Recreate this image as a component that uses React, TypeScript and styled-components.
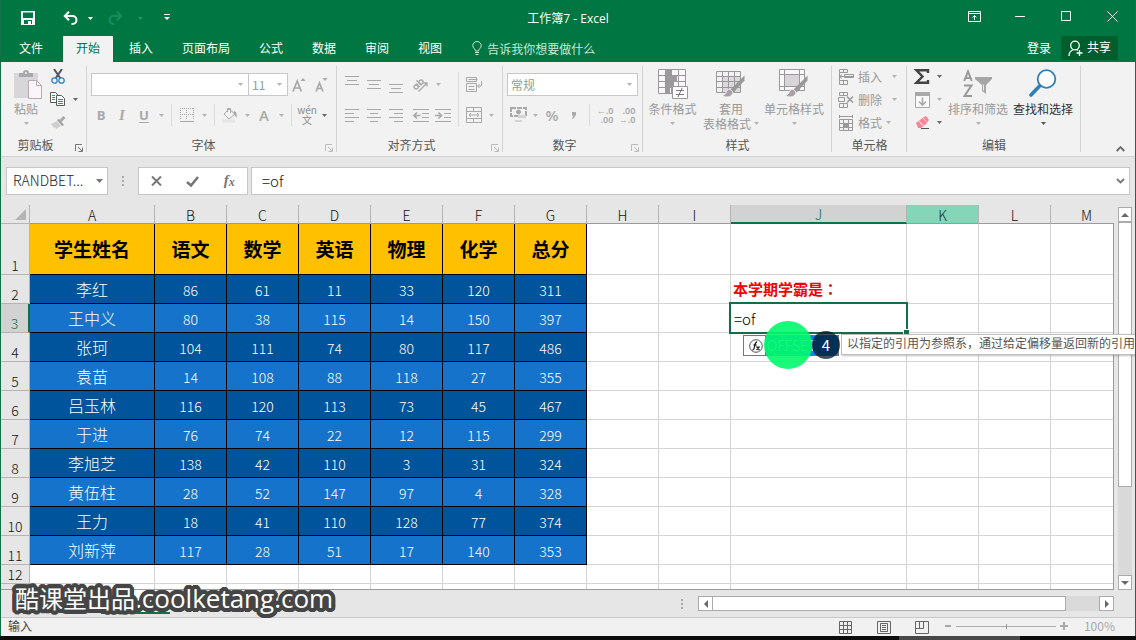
import React from 'react';
import styled, { createGlobalStyle, css } from 'styled-components';

const GREEN = '#007642';
const SHEET_GREEN = '#127049';
const OFF = '#a9a9a9';
const DARK = '#5a5a5a';
const CJK = '"Noto Sans CJK SC", sans-serif';

const GlobalStyle = createGlobalStyle`
  * { box-sizing: border-box; }
  body { margin: 0; font-family: ${CJK}; font-size: 12px; color: #444; }
  button, input, select { font-family: inherit; font-size: inherit; color: inherit; }
  button { border: 0; padding: 0; background: none; cursor: pointer; }
  svg { display: block; flex: none; }
`;

/* ---------- shell ---------- */
const Frame = styled.div`
  position: relative;
  display: flex;
  flex-direction: column;
  height: 100vh;
  background: #e6e6e6;
  overflow: hidden;
`;
const Window = styled.div`
  display: flex;
  flex-direction: column;
  flex: 1;
  min-height: 0;
  border: solid ${SHEET_GREEN};
  border-width: 0 1px;
`;
const Taskbar = styled.div`
  display: flex;
  justify-content: flex-end;
  height: 4px;
  padding-right: 116px;
  background: #0d0d0d;
`;
const TaskItem = styled.div`
  width: 121px;
  background: #484848;
`;

/* ---------- title bar and tabs ---------- */
const TitleBar = styled.header`
  display: grid;
  grid-template-columns: 1fr auto 1fr;
  align-items: center;
  height: 36px;
  background: ${GREEN};
  color: #fff;
`;
const QuickAccess = styled.div`
  display: flex;
  align-items: center;
  padding-left: 16px;
`;
const Title = styled.h1`
  margin: 0;
  padding-top: 1px;
  font-family: "Open Sans", ${CJK};
  font-size: 12px;
  font-weight: 400;
  line-height: 18px;
`;
const WindowButtons = styled.div`
  display: flex;
  justify-content: flex-end;
`;
const TitleButton = styled.button<{ $w: number; $dim?: boolean; $gap?: number }>`
  display: flex;
  align-items: center;
  justify-content: center;
  width: ${(p) => p.$w}px;
  height: 32px;
  margin-left: ${(p) => p.$gap ?? 0}px;
  color: ${(p) => (p.$dim ? '#128f5e' : '#fff')};
`;
const TabBar = styled.nav`
  display: flex;
  align-items: stretch;
  gap: 3px;
  height: 26px;
  padding-left: 5px;
  background: ${GREEN};
  color: #fff;
`;
const Tab = styled.button<{ $active?: boolean }>`
  padding: 0 13px 4px;
  white-space: nowrap;
  &:first-child { margin-right: 4px; }
  ${(p) => p.$active && css`background: #f2f2f2; color: ${GREEN};`}
`;
const TellMe = styled.button`
  display: flex;
  align-items: center;
  gap: 5px;
  margin-left: 14px;
  padding-bottom: 2px;
  color: #c4ecd6;
`;
const Account = styled.div`
  display: flex;
  gap: 10px;
  margin-left: auto;
  padding-right: 17px;
`;
const Login = styled.button`
  padding-bottom: 4px;
`;
const Share = styled.button`
  display: flex;
  align-items: center;
  gap: 4px;
  height: 24px;
  padding: 0 7px;
  background: #005e2c;
  & > span { padding-bottom: 3px; }
`;

/* ---------- ribbon ---------- */
const Ribbon = styled.div`
  display: flex;
  height: 95px;
  border-bottom: 1px solid #d0d0d0;
  background: #f2f2f2;
`;
const GroupBox = styled.section<{ $w: number }>`
  position: relative;
  display: flex;
  flex-direction: column;
  width: ${(p) => p.$w}px;
  flex: none;
  &::after {
    content: '';
    position: absolute;
    top: 4px;
    right: 0;
    bottom: 4px;
    width: 1px;
    background: #d3d3d3;
  }
`;
const GroupBody = styled.div<{ $stack?: boolean; $left?: number }>`
  display: flex;
  flex-direction: ${(p) => (p.$stack ? 'column' : 'row')};
  gap: ${(p) => (p.$stack ? 8 : 0)}px;
  height: 75px;
  padding: ${(p) => (p.$stack ? 11 : 3)}px 0 0 ${(p) => p.$left ?? 4}px;
`;
const GroupFooter = styled.div`
  display: flex;
  align-items: center;
  height: 18px;
`;
const GroupLabel = styled.span`
  flex: 1;
  padding-bottom: 3px;
  text-align: center;
  color: #555;
`;
const Launcher = styled.button`
  display: flex;
  align-items: center;
  justify-content: center;
  width: 17px;
  height: 18px;
  padding-top: 4px;
`;
const Row = styled.div<{ $h: number }>`
  display: flex;
  align-items: center;
  height: ${(p) => p.$h}px;
`;
const Column = styled.div<{ $gap?: number; $top?: number }>`
  display: flex;
  flex-direction: column;
  gap: ${(p) => p.$gap ?? 0}px;
  padding-top: ${(p) => p.$top ?? 0}px;
`;
const Tool = styled.button<{ $w?: number; $on?: boolean }>`
  display: flex;
  align-items: center;
  justify-content: center;
  flex: none;
  width: ${(p) => p.$w ?? 22}px;
  height: 22px;
  color: ${(p) => (p.$on ? DARK : OFF)};
`;
const Glyph = styled.span<{ $size?: number; $italic?: boolean; $under?: boolean }>`
  font-family: ${(p) => (p.$italic ? '"Liberation Serif", serif' : '"Open Sans", sans-serif')};
  font-size: ${(p) => p.$size ?? 13}px;
  font-weight: ${(p) => (p.$size ? 600 : 700)};
  font-style: ${(p) => (p.$italic ? 'italic' : 'normal')};
  line-height: 20px;
  text-decoration: ${(p) => (p.$under ? 'underline' : 'none')};
  text-underline-offset: 2px;
`;
const VLine = styled.span<{ $h?: number }>`
  width: 1px;
  height: ${(p) => p.$h ?? 22}px;
  margin: 0 4px;
  background: #dadada;
`;
const Space = styled.span`
  width: 3px;
`;
const SelectBox = styled.span<{ $w: number; $flush?: boolean }>`
  display: flex;
  align-items: center;
  flex: none;
  width: ${(p) => p.$w}px;
  height: 23px;
  padding-right: 5px;
  border: 1px solid #c8c8c8;
  ${(p) => p.$flush && css`border-left: 0;`}
  background: #fff;
  color: ${OFF};
`;
const Select = styled.select`
  flex: 1;
  min-width: 0;
  height: 21px;
  padding: 0 3px;
  border: 0;
  appearance: none;
  background: transparent;
  color: #8d9f98;
`;
const BigTool = styled.button<{ $w: number; $on?: boolean }>`
  display: flex;
  flex-direction: column;
  align-items: center;
  width: ${(p) => p.$w}px;
  height: 70px;
  padding-top: 4px;
  line-height: 15px;
  white-space: nowrap;
  color: ${(p) => (p.$on ? '#333' : '#999')};
  & > svg:first-child { margin-bottom: 2px; }
  & > svg:last-child { margin-top: 6px; }
`;
const LabelLine = styled.span`
  display: flex;
  align-items: center;
  gap: 3px;
`;
const ListTool = styled.button<{ $gap: number }>`
  display: flex;
  align-items: center;
  height: 23px;
  gap: 4px;
  color: #999;
  & > svg:last-child { margin-left: ${(p) => p.$gap}px; }
`;
const Collapse = styled.button`
  align-self: flex-end;
  margin: 0 10px 4px auto;
`;

/* ---------- formula bar ---------- */
const FormulaBar = styled.div`
  display: flex;
  align-items: center;
  height: 48px;
  padding: 0 5px;
  color: ${DARK};
`;
const FormulaBox = styled.div<{ $w?: number }>`
  display: flex;
  align-items: center;
  ${(p) => (p.$w ? css`width: ${p.$w}px;` : css`flex: 1; min-width: 0;`)}
  height: 28px;
  padding-right: 4px;
  border: 1px solid #c6c6c6;
  background: #fff;
`;
const FormulaInput = styled.input<{ $pad: number; $size: number }>`
  flex: 1;
  min-width: 0;
  height: 26px;
  padding: 0 0 2px ${(p) => p.$pad}px;
  border: 0;
  outline: 0;
  background: transparent;
  font-size: ${(p) => p.$size}px;
  font-weight: 300;
  color: #222;
`;
const FormulaButtons = styled.div`
  display: flex;
  justify-content: space-around;
  align-items: center;
  width: 110px;
  height: 28px;
  margin-right: 3px;
  border: 1px solid #c6c6c6;
  background: #fff;
`;
const FxButton = styled.button`
  font-family: "Liberation Serif", serif;
  font-size: 15px;
  font-style: italic;
  font-weight: 700;
  line-height: 16px;
  color: #777;
  & > sub { font-size: 12px; vertical-align: -1px; }
`;
const Grip = styled.span`
  display: flex;
  justify-content: center;
  width: 30px;
`;

/* ---------- sheet ---------- */
const SheetArea = styled.main`
  position: relative;
  display: flex;
  flex: 1;
  min-height: 0;
  overflow: hidden;
`;
const Viewport = styled.div`
  position: relative;
  flex: 1;
  min-width: 0;
  overflow: hidden;
  border-bottom: 1px solid #9b9b9b;
  background: #fff;
  &::after {
    content: '';
    position: absolute;
    top: 18px;
    right: 0;
    bottom: 0;
    width: 1px;
    background: #9b9b9b;
  }
`;
const Grid = styled.table`
  table-layout: fixed;
  width: 1px;
  border-spacing: 0;
  background: #fff;
`;
const Corner = styled.td`
  height: 19px;
  padding: 0;
  border: solid #b4b4b4;
  border-width: 0 1px 1px 0;
  background: #e6e6e6;
  & > svg { margin: 0 3px 0 auto; }
`;
const ColHead = styled.th<{ $mark?: 'active' | 'hover' }>`
  height: 19px;
  padding: 2px 0 0;
  border: solid #b4b4b4;
  border-width: 0 1px 1px 0;
  border-bottom-color: #9b9b9b;
  background: #e6e6e6;
  font-size: 14px;
  font-weight: 300;
  line-height: 16px;
  color: #111;
  ${(p) => p.$mark === 'active' && css`
    padding-top: 1px;
    background: #d2d2d2;
    color: ${SHEET_GREEN};
    border-bottom: 2px solid ${SHEET_GREEN};
  `}
  ${(p) => p.$mark === 'hover' && css`background: #84d6b8; color: #0d3324;`}
`;
const RowHead = styled.th<{ $active?: boolean }>`
  padding: 0 0 1px;
  border: solid #b4b4b4;
  border-width: 0 1px 1px 0;
  background: #e6e6e6;
  font-size: 14px;
  font-weight: 300;
  line-height: 16px;
  vertical-align: bottom;
  color: #111;
  ${(p) => p.$active && css`
    background: #d2d2d2;
    color: ${SHEET_GREEN};
    border-right: 2px solid ${SHEET_GREEN};
  `}
`;
const TitleCell = styled.td`
  padding: 0;
  border: solid #000;
  border-width: 0 1px 1px 0;
  background: #ffc000;
  color: #000;
  font-size: 19px;
  font-weight: 700;
  line-height: 24px;
  text-align: center;
`;
const DataCell = styled.td<{ $alt: boolean; $name?: boolean }>`
  padding: ${(p) => (p.$name ? 0 : 2)}px 0 0;
  border: solid #000;
  border-width: 0 1px 1px 0;
  background: ${(p) => (p.$alt ? '#1573cb' : '#00549c')};
  color: #fff;
  font-size: ${(p) => (p.$name ? 16 : 14)}px;
  font-weight: 300;
  line-height: 20px;
  text-align: center;
`;
const BlankCell = styled.td`
  position: relative;
  padding: 0 0 0 2px;
  border: solid #d4d4d4;
  border-width: 0 1px 1px 0;
  white-space: nowrap;
`;
const Note = styled.strong`
  font-size: 15px;
  line-height: 20px;
  color: #f00000;
`;
const MidPunct = styled.span`
  font-family: "Noto Sans CJK TC", sans-serif;
`;
const ActiveFrame = styled.span`
  position: absolute;
  inset: -2px;
  z-index: 1;
  border: 2px solid ${SHEET_GREEN};
  background: #fff;
  &::after {
    content: '';
    position: absolute;
    right: -3px;
    bottom: -3px;
    width: 5px;
    height: 5px;
    border: solid #fff;
    border-width: 1px 0 0 1px;
    background: ${SHEET_GREEN};
  }
`;
const CellInput = styled.input`
  width: 100%;
  height: 100%;
  padding: 0 3px;
  border: 0;
  outline: 0;
  background: transparent;
  font-size: 15px;
  font-weight: 300;
  color: #000;
`;
const Suggest = styled.div`
  position: absolute;
  z-index: 2;
  left: 742px;
  top: 130px;
  display: flex;
  width: 96px;
  height: 21px;
  border: 1px solid #767676;
  background: #fff;
`;
const SuggestIcon = styled.span`
  display: flex;
  align-items: center;
  justify-content: center;
  width: 21px;
  padding-left: 3px;
`;
const SuggestName = styled.span`
  flex: 1;
  padding-left: 2px;
  background: #0a84e0;
  color: #fff;
  font-size: 14px;
  font-weight: 300;
  line-height: 19px;
`;
const ClickSpot = styled.span`
  position: absolute;
  z-index: 3;
  left: 763px;
  top: 116px;
  width: 48px;
  height: 48px;
  border-radius: 50%;
  background: rgba(0, 250, 108, 0.9);
`;
const StepBadge = styled.span`
  position: absolute;
  z-index: 4;
  left: 811px;
  top: 126px;
  width: 28px;
  height: 28px;
  border-radius: 50%;
  background: rgba(0, 20, 40, 0.74);
  color: #fff;
  font-size: 15px;
  line-height: 28px;
  text-align: center;
`;
const Tip = styled.div`
  position: absolute;
  z-index: 3;
  left: 840px;
  top: 129px;
  height: 21px;
  padding: 0 6px 0 5px;
  border: 1px solid #bdbdbd;
  background: #fff;
  box-shadow: 1px 1px 2px rgba(0, 0, 0, 0.25);
  line-height: 16px;
  white-space: nowrap;
  color: #555;
`;
const VScroll = styled.div`
  display: flex;
  flex-direction: column;
  width: 14px;
  margin: 2px 3px 0 4px;
  background: #d9d9d9;
`;
const ScrollButton = styled.button<{ $w: number }>`
  display: flex;
  align-items: center;
  justify-content: center;
  flex: none;
  width: ${(p) => p.$w}px;
  height: 15px;
  border: 1px solid #ababab;
  background: #fff;
`;
const VThumb = styled.div`
  flex: 3;
  border: 1px solid #ababab;
  background: #fff;
`;
const VTrack = styled.div`
  flex: 1;
`;

/* ---------- bottom bars ---------- */
const SheetTabs = styled.div`
  display: flex;
  height: 27px;
  padding-right: 21px;
`;
const SheetTab = styled.button`
  width: 69px;
  height: 24px;
  margin-left: 100px;
  border-bottom: 2px solid ${SHEET_GREEN};
  background: #fff;
  color: ${SHEET_GREEN};
  font-weight: 700;
`;
const HScroll = styled.div`
  display: flex;
  align-items: center;
  width: 438px;
  margin-left: auto;
`;
const HTrack = styled.div`
  flex: 1;
  height: 15px;
  padding-right: 33px;
  background: #dadada;
`;
const HThumb = styled.div`
  height: 15px;
  border: 1px solid #ababab;
  border-left-width: 0;
  background: #fff;
`;
const HGrip = styled.span`
  width: 22px;
  padding-left: 5px;
`;
const StatusBar = styled.footer`
  display: flex;
  align-items: center;
  height: 19px;
  padding: 0 20px 2px 7px;
  border-top: 1px solid #c9c9c9;
  background: #f1f1f1;
  line-height: 16px;
`;
const Views = styled.div`
  display: flex;
  gap: 24px;
  margin-left: auto;
  padding: 2px 16px 0 0;
`;
const Zoom = styled.div`
  display: flex;
  align-items: center;
  gap: 4px;
  color: #a8a8a8;
`;
const ZoomRange = styled.input`
  width: 100px;
  height: 9px;
  margin: 0;
  appearance: none;
  background: linear-gradient(#adadad, #adadad) center / 100% 1px no-repeat;
  &::-webkit-slider-thumb {
    appearance: none;
    width: 1px;
    height: 5px;
    background: #999;
  }
`;
const ZoomValue = styled.output`
  width: 43px;
  text-align: right;
`;

const outline = (r: number, color: string) =>
  Array.from({ length: 32 }, (_, i) => {
    const a = (i * Math.PI) / 16;
    return `${(r * Math.cos(a)).toFixed(1)}px ${(r * Math.sin(a)).toFixed(1)}px 0 ${color}`;
  }).join(', ');

const Watermark = styled.div`
  position: absolute;
  z-index: 5;
  left: 15px;
  bottom: 24px;
  color: #fff;
  font-size: 24px;
  line-height: 36px;
  white-space: nowrap;
  text-shadow: ${outline(4, '#454545')}, ${outline(2, '#454545')};
`;
const Domain = styled.span`
  position: relative;
  z-index: -1;
  font-family: "Open Sans", ${CJK};
  font-size: 26px;
`;

/* ---------- icons ---------- */
type IconProps = { w: number; h: number; children: React.ReactNode; sw?: number };
const Icon = ({ w, h, children, sw = 1 }: IconProps) => (
  <svg width={w} height={h} viewBox={`0 0 ${w} ${h}`} fill="none" stroke="currentColor" strokeWidth={sw} aria-hidden="true">
    {children}
  </svg>
);
const Caret = ({ color = '#b4b4b4' }: { color?: string }) => (
  <svg width="5" height="3" viewBox="0 0 5 3" aria-hidden="true"><path d="M0 0h5L2.500 3z" fill={color} /></svg>
);
const Arrow = ({ d }: { d: string }) => (
  <svg width="8" height="8" viewBox="0 0 8 8" aria-hidden="true"><path d={d} fill="#6a6a6a" /></svg>
);
const Lines = ({ rows, h = 13 }: { rows: [number, number][]; h?: number }) => (
  <Icon w={14} h={h}>
    <path d={rows.map(([a, b], i) => `M${a} ${i * 4 + 0.5}H${b}`).join('')} />
  </Icon>
);
const DotsV = ({ color = '#a9a9a9' }: { color?: string }) => (
  <svg width="2" height="10" viewBox="0 0 2 10" aria-hidden="true">
    <path d="M0 0h2v2H0zM0 4h2v2H0zM0 8h2v2H0z" fill={color} />
  </svg>
);
const SaveIcon = () => (
  <Icon w={14} h={14}>
    <path d="M0 0h14v14H0z" fill="#fff" stroke="none" />
    <path d="M2 1.500h10V7H2zM3 9h8v4H3z" fill={GREEN} stroke="none" />
    <path d="M7 10h3v3H7z" fill="#fff" stroke="none" />
  </Icon>
);
const UndoIcon = ({ flip }: { flip?: boolean }) => (
  <Icon w={16} h={14} sw={2}>
    <g transform={flip ? 'matrix(-1 0 0 1 16 0)' : undefined}>
      <path d="M2 5h7.500a4 4 0 0 1 0 8H8.500" />
      <path d="M6 .8L1.800 5 6 9.200" />
    </g>
  </Icon>
);
const MoreIcon = () => (
  <Icon w={6} h={9}><path d="M0 .5h6" /><path d="M0 3h6L3 6z" fill="currentColor" stroke="none" /></Icon>
);
const BulbIcon = () => (
  <Icon w={10} h={14}>
    <path d="M3.500 10C3.500 8 .8 7.200 .8 4.700a4.200 4.200 0 0 1 8.400 0C9.200 7.200 6.500 8 6.500 10zM3 11.500h4M3.500 13.500h3" />
  </Icon>
);
const PersonIcon = () => (
  <Icon w={15} h={17} sw={1.3}>
    <circle cx="7" cy="5.500" r="4.300" />
    <path d="M1 16c0-3.500 2-5.500 4.500-6.500M8.500 9.500l1.500 1M11.500 10v6M8.500 13h6" />
  </Icon>
);
const PasteIcon = () => (
  <Icon w={32} h={30}>
    <g transform="translate(4 0)">
      <path d="M0 4h24v25H0z" fill="#d9d6da" stroke="none" />
      <path d="M5 8V4h4a3 3 0 0 1 6 0h4v4z" fill="#a9a9a9" stroke="none" />
      <circle cx="12" cy="4" r="1" fill="#f2f2f2" stroke="none" />
      <path d="M14.500 11.500h8l5 5v13h-13z" fill="#fbf4f9" stroke="#b5adb2" />
      <path d="M22.500 11.500v5h5" stroke="#b5adb2" />
    </g>
  </Icon>
);
const CutIcon = () => (
  <Icon w={14} h={15}>
    <path d="M3 0l6.500 9.500M11 0L4.500 9.500" stroke="#555" strokeWidth="2" />
    <circle cx="3.500" cy="11.500" r="2.700" stroke="#3b82b8" strokeWidth="1.300" />
    <circle cx="10.500" cy="11.500" r="2.700" stroke="#3b82b8" strokeWidth="1.300" />
  </Icon>
);
const CopyIcon = () => (
  <Icon w={16} h={15}>
    <path d="M.5 .5h5l2 2v8h-7z" fill="#fff" />
    <path d="M2 3.500h3M2 5.500h3M2 7.500h3" stroke="#3b82b8" />
    <path d="M6.500 3.500h5l3 3v7h-8z" fill="#fff" />
    <path d="M8 7.500h5M8 9.500h5M8 11.500h5" stroke="#3b82b8" />
  </Icon>
);
const BrushIcon = () => (
  <Icon w={16} h={14}>
    <path d="M1 8l6-3 4 5-5 3-1-2-1 1z" fill="#cfcfcf" stroke="none" />
    <path d="M7 4l2-1 5 6-2 1z" fill="#a0a0a0" stroke="none" />
    <path d="M10.500 5l4-4" strokeWidth="3" />
  </Icon>
);
const FontSize = ({ up }: { up?: boolean }) => (
  <Icon w={14} h={16}>
    <path d={up ? 'M1 14.500L5.200 4l4.200 10.500M2.700 11h5' : 'M2 14.500L5.500 6 9 14.500M3.300 11.500h4.400'} strokeWidth="1.700" />
    <path d={up ? 'M8.500 4h5L11 1z' : 'M8.500 1h5L11 4z'} fill="currentColor" stroke="none" />
  </Icon>
);
const BorderIcon = () => (
  <Icon w={14} h={14}>
    <path d="M.5 0v12M6.500 0v12M13.500 0v12M0 .5h14M0 6.500h14" strokeDasharray="1 1" />
    <path d="M0 13.500h14" />
  </Icon>
);
const BucketIcon = () => (
  <Icon w={16} h={16}>
    <path d="M2 7l5-5 6 5-6 5z" />
    <path d="M5.500 5V1.500h3V6" />
    <path d="M12 4c3 1 3 3 2.500 7-1-1-1-3-3-4z" fill="currentColor" stroke="none" />
    <path d="M0 12.500h13v3H0z" fill="#e4e4e4" stroke="none" />
  </Icon>
);
const Phonetic = styled.span`
  display: flex;
  flex-direction: column;
  align-items: center;
  font-size: 10px;
  line-height: 10px;
  color: #8c8c8c;
`;
const OrientIcon = () => (
  <Icon w={18} h={16}>
    <g transform="rotate(-45 5 7)">
      <circle cx="2.300" cy="8.500" r="2" strokeWidth="1.400" />
      <path d="M4.800 6v5M7.300 4v7" strokeWidth="1.400" />
      <circle cx="9.300" cy="8.500" r="2" strokeWidth="1.400" />
    </g>
    <path d="M6.500 14.500L15 6M11.500 6H15v3.500" strokeWidth="1.300" />
  </Icon>
);
const IndentIcon = ({ right }: { right?: boolean }) => (
  <Icon w={16} h={13}>
    <path d="M0 .5h16M9 4.500h7M9 8.500h7M0 12.500h16" />
    <path d={right ? 'M0 6.500h6M3.500 3.500l3 3-3 3' : 'M1 6.500h6.500M4 3.500l-3 3 3 3'} strokeWidth="1.700" />
  </Icon>
);
const WrapIcon = () => (
  <Icon w={17} h={16}>
    <path d="M.5 .5h10v4H.5zM.5 6.500h10v8H.5zM2.500 2.500h9M2.500 9.500h6M2.500 12.500h6M15.500 4v5H12M13.500 7l-2 2 2 2" />
  </Icon>
);
const MergeIcon = () => (
  <Icon w={16} h={16}>
    <path d="M.5 .5h15v15H.5zM.5 4.500h15M.5 11.500h15M7.500 .5v4M7.500 11.500v4M3 8h10M5 6L3 8l2 2M11 6l2 2-2 2" />
  </Icon>
);
const MoneyIcon = () => (
  <Icon w={17} h={16}>
    <path d="M1 1h15v8H1z" strokeWidth="2" strokeDasharray="5 1" />
    <circle cx="8.500" cy="5" r="2" fill="currentColor" />
    <path d="M8 8h8v3H8zM5 13h7v2H5z" fill="#d4d4d4" stroke="none" />
  </Icon>
);
const Decimals = styled.span`
  display: flex;
  flex-direction: column;
  font-family: "Noto Sans", sans-serif;
  font-size: 9px;
  font-weight: 600;
  line-height: 9px;
  text-align: right;
`;
const CondIcon = () => (
  <Icon w={30} h={30}>
    <path d="M.5 .5h27v24H.5zM.5 6.500h27M.5 12.500h27M.5 18.500h27M7.500 .5v24M13.500 .5v24M20.500 .5v24" fill="#faf7fa" />
    <path d="M8 1h5v5H8zM8 7h11v5H8zM8 13h8v5H8zM8 19h4v5H8z" fill="#9b9b9b" stroke="none" />
    <path d="M14.500 17.500h15v12h-15z" fill="#fff" />
    <path d="M18 21.500h8M18 25.500h8M24 19l-4 9" stroke="#777" />
  </Icon>
);
const Brush = () => (
  <>
    <path d="M28.500 6.500v5l-11 12-3-3z" fill="#999" stroke="none" />
    <path d="M14 20c-4 0-3 5-8 7 5 2 11 1 11-4z" fill="#a8a2a8" stroke="#f2f2f2" />
  </>
);
const TableFmtIcon = () => (
  <Icon w={30} h={30}>
    <path d="M7 7h17v17H7z" fill="#dcd8dd" stroke="none" />
    <path d="M.5 2.500h24v21H.5zM.5 7.500h24M.5 12.500h24M.5 18.500h24M6.500 2.500v21M12.500 2.500v21M18.500 2.500v21" />
    <Brush />
  </Icon>
);
const CellStyleIcon = () => (
  <Icon w={30} h={30}>
    <path d="M.5 .5h25v21H.5zM.5 5.500h25M.5 17.500h25M5.500 .5v21M20.500 .5v21" fill="#faf7fa" />
    <path d="M6 6h14v11H6z" fill="#d9d4da" stroke="none" />
    <Brush />
  </Icon>
);
const InsertIcon = () => (
  <Icon w={16} h={16}>
    <path d="M1.500 .5h8v3h-8zM5.500 .5v3M1.500 11.500h8v4h-8zM5.500 11.500v4M1.500 3.500v8M1.500 7.500h14M6.500 5.500h9v3h-9zM4 5.500l-2.500 2L4 9.500" />
  </Icon>
);
const DeleteIcon = () => (
  <Icon w={16} h={16}>
    <path d="M1.500 .5h8v3h-8zM5.500 .5v3M1.500 11.500h8v4h-8zM5.500 11.500v4M.5 5.500h6v4h-6z" />
    <path d="M9 4.500l6 6M15 4.500l-6 6" strokeWidth="1.500" />
  </Icon>
);
const FormatIcon = () => (
  <Icon w={16} h={16}>
    <path d="M1.500 4.500h13v11h-13zM1.500 8.500h13M1.500 12.500h13M5.500 4.500v11M10.500 4.500v11M1 1.500h13M1.500 0v3M14.500 0v3" />
    <path d="M6 8h5v5H6z" fill="currentColor" stroke="none" />
  </Icon>
);
const SigmaIcon = () => (
  <Icon w={16} h={15} sw={2.4}>
    <path d="M14 4V1.300H2.500l6 6.200-6 6.200H14V11" stroke="#444" />
  </Icon>
);
const FillIcon = () => (
  <Icon w={15} h={16}>
    <path d="M.5 .5h14v15H.5z" fill="#fafafa" /><path d="M0 0h15v4H0z" fill="currentColor" stroke="none" />
    <path d="M7.500 5.500v7M4 9.500l3.500 3.500L11 9.500" strokeWidth="1.600" />
  </Icon>
);
const EraserIcon = () => (
  <Icon w={15} h={13}>
    <path d="M8 1.500L11 0l3 4-2 2.500z" fill="#ff8296" stroke="none" />
    <path d="M1 7l6.500-5 4.500 5-6 5H3z" fill="#ff8296" stroke="none" />
    <path d="M4 5l4 4.500" stroke="#fff" /><path d="M6 12.500h8" stroke="#555" />
  </Icon>
);
const SortIcon = () => (
  <Icon w={30} h={30}>
    <path d="M1.200 12L5 2.500 8.800 12M2.500 9h5M1 16.500h7.500L1.500 27H9" strokeWidth="2" />
    <path d="M12 8h17v2l-6 6v9l-4-3v-6l-7-6z" fill="#a6a6a6" stroke="none" />
    <path d="M20.500 15.500v6" stroke="#eee" />
  </Icon>
);
const FindIcon = () => (
  <Icon w={28} h={30}>
    <path d="M2 26l9.500-10" stroke="#2f7fb8" strokeWidth="3.600" strokeLinecap="round" />
    <circle cx="17.500" cy="10" r="8.800" fill="#fff" stroke="#2f7fb8" strokeWidth="1.800" />
  </Icon>
);
const LauncherIcon = ({ on }: { on?: boolean }) => (
  <Icon w={8} h={8}>
    <path d="M.5 7V.5H7M3 3l4 4M7.500 3.500v4h-4" stroke={on ? '#777' : '#bdbdbd'} />
  </Icon>
);

/* ---------- data ---------- */
const TABS = ['文件', '开始', '插入', '页面布局', '公式', '数据', '审阅', '视图'];
const COLS = 'ABCDEFGHIJKLM'.split('');
const HEADERS = ['学生姓名', '语文', '数学', '英语', '物理', '化学', '总分'];
const STUDENTS: (string | number)[][] = [
  ['李红', 86, 61, 11, 33, 120, 311],
  ['王中义', 80, 38, 115, 14, 150, 397],
  ['张珂', 104, 111, 74, 80, 117, 486],
  ['袁苗', 14, 108, 88, 118, 27, 355],
  ['吕玉林', 116, 120, 113, 73, 45, 467],
  ['于进', 76, 74, 22, 12, 115, 299],
  ['李旭芝', 138, 42, 110, 3, 31, 324],
  ['黄伍柱', 28, 52, 147, 97, 4, 328],
  ['王力', 18, 41, 110, 128, 77, 374],
  ['刘新萍', 117, 28, 51, 17, 140, 353],
];
const ROWS = Array.from({ length: 12 }, (_, i) => i + 1);
const colWidth = (c: string) => (c === 'A' ? 125 : c === 'J' ? 176 : 72);
const rowHeight = (n: number) => (n === 1 ? 51 : n <= 11 ? 29 : 19);

type GroupProps = {
  label: string; w: number; stack?: boolean; left?: number;
  launcher?: 'on' | 'off'; children: React.ReactNode;
};
const Group = ({ label, w, stack, left, launcher, children }: GroupProps) => (
  <GroupBox $w={w} aria-label={label}>
    <GroupBody $stack={stack} $left={left}>{children}</GroupBody>
    <GroupFooter>
      <GroupLabel>{label}</GroupLabel>
      {launcher && <Launcher aria-label={`${label}设置`}><LauncherIcon on={launcher === 'on'} /></Launcher>}
    </GroupFooter>
  </GroupBox>
);
const DropDown = ({ on, label }: { on?: boolean; label: string }) => (
  <Tool $w={12} aria-label={label}><Caret color={on ? '#666' : undefined} /></Tool>
);

const Cell = ({ col, row }: { col: string; row: number }) => {
  const i = COLS.indexOf(col);
  if (i < 7 && row === 1) return <TitleCell>{HEADERS[i]}</TitleCell>;
  if (i < 7 && row <= 11) {
    return <DataCell $alt={row % 2 === 1} $name={i === 0}>{STUDENTS[row - 2][i]}</DataCell>;
  }
  if (col === 'J' && row === 2) {
    return <BlankCell><Note>本学期学霸是<MidPunct>：</MidPunct></Note></BlankCell>;
  }
  if (col === 'J' && row === 3) {
    return (
      <BlankCell>
        <ActiveFrame><CellInput aria-label="J3" defaultValue="=of" /></ActiveFrame>
      </BlankCell>
    );
  }
  return <BlankCell />;
};

export default function App() {
  return (
    <Frame>
      <GlobalStyle />
      <Window>
        <TitleBar>
          <QuickAccess>
            <TitleButton $w={22} aria-label="保存"><SaveIcon /></TitleButton>
            <TitleButton $w={26} $gap={19} aria-label="撤消"><UndoIcon /></TitleButton>
            <TitleButton $w={12} aria-label="撤消列表"><Caret color="#fff" /></TitleButton>
            <TitleButton $w={38} $dim aria-label="恢复"><UndoIcon flip /></TitleButton>
            <TitleButton $w={12} $dim aria-label="恢复列表"><Caret color="#239a6a" /></TitleButton>
            <TitleButton $w={42} aria-label="自定义快速访问工具栏"><MoreIcon /></TitleButton>
          </QuickAccess>
          <Title>工作簿7 - Excel</Title>
          <WindowButtons>
            <TitleButton $w={46} aria-label="功能区显示选项">
              <Icon w={13} h={15}><path d="M.5 .5h12v10H.5zM.5 2.500h12M6.500 9V4.500M4.500 6.500l2-2 2 2" /></Icon>
            </TitleButton>
            <TitleButton $w={46} aria-label="最小化"><Icon w={10} h={10}><path d="M0 3.500h10" /></Icon></TitleButton>
            <TitleButton $w={46} aria-label="最大化"><Icon w={10} h={14}><path d="M.5 .5h9v9h-9z" /></Icon></TitleButton>
            <TitleButton $w={46} aria-label="关闭"><Icon w={11} h={15}><path d="M.5 .5l10 10M10.500 .5l-10 10" /></Icon></TitleButton>
          </WindowButtons>
        </TitleBar>
        <TabBar>
          {TABS.map((t) => <Tab key={t} $active={t === '开始'}>{t}</Tab>)}
          <TellMe><BulbIcon />告诉我你想要做什么</TellMe>
          <Account>
            <Login>登录</Login>
            <Share><PersonIcon /><span>共享</span></Share>
          </Account>
        </TabBar>

        <Ribbon>
          <Group label="剪贴板" w={86} launcher="on">
            <BigTool $w={42}><PasteIcon /><span>粘贴</span><Caret /></BigTool>
            <Column>
              <Row $h={23}><Tool $on aria-label="剪切"><CutIcon /></Tool></Row>
              <Row $h={23}><Tool $on aria-label="复制"><CopyIcon /></Tool><DropDown on label="复制选项" /></Row>
              <Row $h={23}><Tool aria-label="格式刷"><BrushIcon /></Tool></Row>
            </Column>
          </Group>

          <Group label="字体" w={250} stack launcher="off">
            <Row $h={23}>
              <SelectBox $w={158}>
                <Select aria-label="字体" defaultValue=""><option value="" /></Select><Caret />
              </SelectBox>
              <SelectBox $w={39} $flush>
                <Select aria-label="字号" defaultValue="11"><option>11</option></Select><Caret />
              </SelectBox>
              <Tool aria-label="增大字号"><FontSize up /></Tool>
              <Tool aria-label="减小字号"><FontSize /></Tool>
            </Row>
            <Row $h={22}>
              <Tool $w={20} aria-label="加粗"><Glyph>B</Glyph></Tool>
              <Tool aria-label="倾斜"><Glyph $size={15} $italic>I</Glyph></Tool>
              <Tool aria-label="下划线"><Glyph $under>U</Glyph></Tool>
              <DropDown label="下划线选项" />
              <VLine />
              <Tool aria-label="边框"><BorderIcon /></Tool>
              <DropDown label="边框选项" />
              <VLine />
              <Tool aria-label="填充颜色"><BucketIcon /></Tool>
              <DropDown label="填充颜色选项" />
              <Tool aria-label="字体颜色"><Glyph $size={15}>A</Glyph></Tool>
              <DropDown label="字体颜色选项" />
              <VLine />
              <Tool aria-label="拼音"><Phonetic><span>wén</span><span>文</span></Phonetic></Tool>
              <DropDown on label="拼音选项" />
            </Row>
          </Group>

          <Group label="对齐方式" w={166} launcher="off">
            <Column $gap={8} $top={8}>
              <Row $h={23}>
                <Tool aria-label="顶端对齐"><Lines h={17} rows={[[0, 14], [2, 12], [0, 14]]} /></Tool>
                <Tool aria-label="垂直居中"><Lines h={9} rows={[[0, 14], [2, 12], [0, 14]]} /></Tool>
                <Tool aria-label="底端对齐"><Icon w={14} h={17}><path d="M0 8.500h14M2 12.500h10M0 16.500h14" /></Icon></Tool>
                <Space />
                <Tool aria-label="方向"><OrientIcon /></Tool>
                <DropDown label="方向选项" />
              </Row>
              <Row $h={22}>
                <Tool aria-label="左对齐"><Lines rows={[[0, 14], [0, 9], [0, 14], [0, 9]]} /></Tool>
                <Tool aria-label="居中"><Lines rows={[[0, 14], [3, 11], [0, 14], [3, 11]]} /></Tool>
                <Tool aria-label="右对齐"><Lines rows={[[0, 14], [5, 14], [0, 14], [5, 14]]} /></Tool>
                <Space />
                <Tool aria-label="减少缩进量"><IndentIcon /></Tool>
                <Tool aria-label="增加缩进量"><IndentIcon right /></Tool>
              </Row>
            </Column>
            <Column $top={7}><VLine $h={55} /></Column>
            <Column $gap={8} $top={8}>
              <Row $h={23}><Tool aria-label="自动换行"><WrapIcon /></Tool></Row>
              <Row $h={22}><Tool aria-label="合并后居中"><MergeIcon /></Tool><DropDown label="合并选项" /></Row>
            </Column>
          </Group>

          <Group label="数字" w={140} stack launcher="off">
            <Row $h={23}>
              <SelectBox $w={131}>
                <Select aria-label="数字格式" defaultValue="常规"><option>常规</option></Select><Caret />
              </SelectBox>
            </Row>
            <Row $h={22}>
              <Tool aria-label="会计数字格式"><MoneyIcon /></Tool>
              <DropDown label="会计数字格式选项" />
              <Tool aria-label="百分比样式"><Glyph $size={15}>%</Glyph></Tool>
              <Tool aria-label="千位分隔样式">
                <Icon w={6} h={8}><path d="M1 1h4v3L2 8H1l1.500-3.500H1z" fill="currentColor" stroke="none" /></Icon>
              </Tool>
              <VLine />
              <Tool aria-label="增加小数位数"><Decimals><span>←.0</span><span>.00</span></Decimals></Tool>
              <Tool aria-label="减少小数位数"><Decimals><span>.00</span><span>→.0</span></Decimals></Tool>
            </Row>
          </Group>

          <Group label="样式" w={189} left={1}>
            <BigTool $w={57}><CondIcon /><span>条件格式</span><Caret /></BigTool>
            <BigTool $w={60}>
              <TableFmtIcon /><span>套用</span>
              <LabelLine>表格格式<Caret /></LabelLine>
            </BigTool>
            <BigTool $w={66}><CellStyleIcon /><span>单元格样式</span><Caret /></BigTool>
          </Group>

          <Group label="单元格" w={75} left={6}>
            <Column>
              <ListTool $gap={6}><InsertIcon />插入<Caret /></ListTool>
              <ListTool $gap={6}><DeleteIcon />删除<Caret /></ListTool>
              <ListTool $gap={0}><FormatIcon />格式<Caret /></ListTool>
            </Column>
          </Group>

          <Group label="编辑" w={174}>
            <Column>
              <Row $h={23}><Tool $on aria-label="自动求和"><SigmaIcon /></Tool><DropDown on label="求和选项" /></Row>
              <Row $h={23}><Tool aria-label="填充"><FillIcon /></Tool><DropDown label="填充选项" /></Row>
              <Row $h={23}><Tool $on aria-label="清除"><EraserIcon /></Tool><DropDown on label="清除选项" /></Row>
            </Column>
            <BigTool $w={66}><SortIcon /><span>排序和筛选</span><Caret /></BigTool>
            <BigTool $w={64} $on><FindIcon /><span>查找和选择</span><Caret color="#555" /></BigTool>
          </Group>
          <Collapse aria-label="折叠功能区"><Icon w={9} h={6} sw={1.8}><path d="M.7 5l3.800-3.800L8.300 5" stroke="#666" /></Icon></Collapse>
        </Ribbon>

        <FormulaBar>
          <FormulaBox $w={102}>
            <FormulaInput $pad={6} $size={14} aria-label="名称框" defaultValue="RANDBET..." />
            <Icon w={7} h={4}><path d="M0 0h7L3.500 4z" fill="#777" stroke="none" /></Icon>
          </FormulaBox>
          <Grip><DotsV /></Grip>
          <FormulaButtons>
            <button aria-label="取消"><Icon w={11} h={10} sw={2}><path d="M1 .5l9 9M10 .5l-9 9" stroke="#777" /></Icon></button>
            <button aria-label="输入"><Icon w={13} h={11} sw={2.6}><path d="M1 6l4 3.500L12 1" stroke="#777" /></Icon></button>
            <FxButton aria-label="插入函数">f<sub>x</sub></FxButton>
          </FormulaButtons>
          <FormulaBox>
            <FormulaInput $pad={10} $size={15} aria-label="编辑栏" defaultValue="=of" />
            <Icon w={9} h={6} sw={1.8}><path d="M1 1l3.500 3.500L8 1" stroke="#777" /></Icon>
          </FormulaBox>
        </FormulaBar>

        <SheetArea>
          <Viewport>
            <Grid>
              <colgroup>
                <col width={29} />
                {COLS.map((c) => <col key={c} width={colWidth(c)} />)}
              </colgroup>
              <thead>
                <tr>
                  <Corner><Icon w={11} h={11}><path d="M11 0v11H0z" fill="#b4b4b4" stroke="none" /></Icon></Corner>
                  {COLS.map((c) => (
                    <ColHead key={c} scope="col" $mark={c === 'J' ? 'active' : c === 'K' ? 'hover' : undefined}>{c}</ColHead>
                  ))}
                </tr>
              </thead>
              <tbody>
                {ROWS.map((n) => (
                  <tr key={n}>
                    <RowHead scope="row" $active={n === 3} height={rowHeight(n)}>{n}</RowHead>
                    {COLS.map((c) => <Cell key={c} col={c} row={n} />)}
                  </tr>
                ))}
                <tr>
                  <RowHead as="td" height={19} />
                  {COLS.map((c) => <BlankCell key={c} />)}
                </tr>
              </tbody>
            </Grid>
          </Viewport>
          <VScroll>
            <ScrollButton $w={14} aria-label="向上滚动"><Arrow d="M0 6h8L4 2z" /></ScrollButton>
            <VThumb />
            <VTrack />
            <ScrollButton $w={14} aria-label="向下滚动"><Arrow d="M0 2h8L4 6z" /></ScrollButton>
          </VScroll>
          <Suggest>
            <SuggestIcon>
              <Icon w={14} h={14}>
                <circle cx="7" cy="7" r="6.300" stroke="#555" />
                <path d="M3.500 11c1.200 0 1.700-1 2.200-4s1-4 2.300-4M4.500 6h3M7.500 7.500l3 3.500M10.500 7.500l-3 3.500" stroke="#222" strokeWidth="1.300" />
              </Icon>
            </SuggestIcon>
            <SuggestName>OFFSET</SuggestName>
          </Suggest>
          <ClickSpot />
          <StepBadge>4</StepBadge>
          <Tip role="tooltip">以指定的引用为参照系，通过给定偏移量返回新的引用</Tip>
        </SheetArea>

        <SheetTabs>
          <SheetTab>Sheet1</SheetTab>
          <HScroll>
            <HGrip><DotsV /></HGrip>
            <ScrollButton $w={15} aria-label="向左滚动"><Arrow d="M6 0v8L2 4z" /></ScrollButton>
            <HTrack><HThumb /></HTrack>
            <ScrollButton $w={15} aria-label="向右滚动"><Arrow d="M2 0v8l4-4z" /></ScrollButton>
          </HScroll>
        </SheetTabs>
        <StatusBar>
          <span>输入</span>
          <Views>
            <button aria-label="普通"><Icon w={14} h={13}><path d="M.5 .5h12v12H.5zM.5 4.500h12M.5 8.500h12M4.500 .5v12M8.500 .5v12" stroke="#666" /></Icon></button>
            <button aria-label="页面布局视图"><Icon w={14} h={13}><path d="M.5 .5h13v12H.5zM3.500 2.500h7v8h-7zM5 4.500h4M5 6.500h4M5 8.500h4" stroke="#666" /></Icon></button>
            <button aria-label="分页预览"><Icon w={14} h={13}><path d="M.5 .5h13v12H.5zM.5 7.500h8V.5M4.500 .5v7" stroke="#666" /></Icon></button>
          </Views>
          <Zoom>
            <button aria-label="缩小"><Icon w={7} h={8} sw={2}><path d="M0 4h6" /></Icon></button>
            <ZoomRange type="range" aria-label="显示比例" min={10} max={190} defaultValue={100} />
            <button aria-label="放大"><Icon w={8} h={8} sw={2}><path d="M0 4h8M4 0v8" /></Icon></button>
            <ZoomValue>100%</ZoomValue>
          </Zoom>
        </StatusBar>
      </Window>
      <Taskbar><TaskItem /></Taskbar>
      <Watermark>酷课堂出品<Domain>.coolketang.com</Domain></Watermark>
    </Frame>
  );
}
